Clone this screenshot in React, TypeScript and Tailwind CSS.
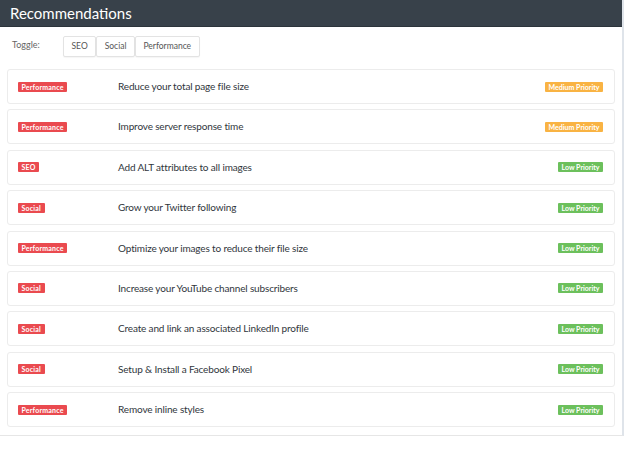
const recs = [
  { cat: "Performance", title: "Reduce your total page file size", prio: "Medium" },
  { cat: "Performance", title: "Improve server response time", prio: "Medium" },
  { cat: "SEO", title: "Add ALT attributes to all images", prio: "Low" },
  { cat: "Social", title: "Grow your Twitter following", prio: "Low" },
  { cat: "Performance", title: "Optimize your images to reduce their file size", prio: "Low" },
  { cat: "Social", title: "Increase your YouTube channel subscribers", prio: "Low" },
  { cat: "Social", title: "Create and link an associated LinkedIn profile", prio: "Low" },
  { cat: "Social", title: "Setup & Install a Facebook Pixel", prio: "Low" },
  { cat: "Performance", title: "Remove inline styles", prio: "Low" },
];

export default function App() {
  return (
    <div className="w-[624px] h-[452px] bg-white font-['Lato',sans-serif]">
      <div className="w-[624px] border-r-2 border-b border-r-[#dfe4ea] border-b-[#e6e6e6] bg-white">
        <div className="h-[27px] bg-[#38414a] border-b border-[#2c343b] flex items-center px-[10px]">
          <h2 className="text-white text-[15px] leading-none">Recommendations</h2>
        </div>

        <div className="flex items-center pl-[12px] pt-[9px] h-[30px]">
          <span className="text-[9px] text-[#666] w-[51px] -mt-[3px]">Toggle:</span>
          <div className="flex">
            {["SEO", "Social", "Performance"].map((t) => (
              <button
                key={t}
                className="h-[21px] px-[7.5px] border border-[#e3e3e3] rounded-[2px] bg-white text-[8.5px] text-[#555] shadow-[0_1px_1px_rgba(0,0,0,0.04)]"
              >
                {t}
              </button>
            ))}
          </div>
        </div>

        <div className="flex flex-col gap-[5.4px] px-[7px] pt-[12px] pb-[8px]">
          {recs.map((r, i) => (
            <div
              key={i}
              className="h-[35px] flex items-center border border-[#ececec] rounded-[3px] pl-[10px] pr-[11px]"
            >
              <div className="w-[100px] flex items-center">
                <span className="bg-[#ea4a4f] text-white text-[7px] font-bold leading-[10px] px-[3.5px] rounded-[1px] tracking-[0.2px]">
                  {r.cat}
                </span>
              </div>
              <span className="flex-1 text-[10px] tracking-[-0.15px] text-[#30363c]">{r.title}</span>
              <span
                className={
                  r.prio === "Medium"
                    ? "bg-[#f9b343] text-white text-[7px] font-bold leading-[10px] px-[3.5px] rounded-[1px]"
                    : "bg-[#6cc05c] text-white text-[7px] font-bold leading-[10px] px-[3.5px] rounded-[1px]"
                }
              >
                {r.prio} Priority
              </span>
            </div>
          ))}
        </div>
      </div>
    </div>
  );
}
